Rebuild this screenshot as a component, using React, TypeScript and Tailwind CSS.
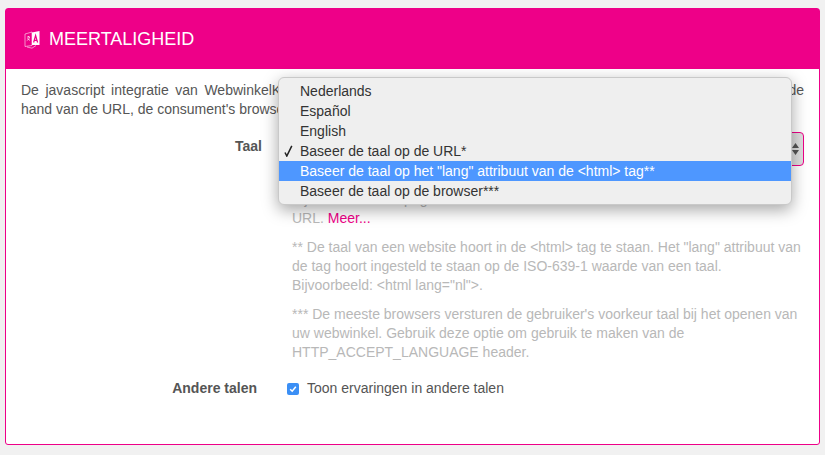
import type { ReactNode } from "react";

const options = [
  "Nederlands",
  "Español",
  "English",
  "Baseer de taal op de URL*",
  'Baseer de taal op het "lang" attribuut van de <html> tag**',
  "Baseer de taal op de browser***",
];

function TranslateIcon() {
  return (
    <svg width="17" height="19" viewBox="0 0 17 19" fill="none">
      <path d="M1 4 8 2V15.5L1 16.5Z" stroke="#fff" strokeWidth="0.7" opacity="0.8" />
      <path d="M8 2.5 15.5 1V15H8Z" fill="#fff" />
      <path d="M3 7H6M4.5 6V7M5.5 7C5 9 4 10 2.8 10.6M3.5 8.4C4 9.2 5 10 6 10.4" stroke="#fff" strokeWidth="0.7" />
      <path d="M9.6 12.5 11.6 5.5 13.6 12.5M10.4 10.4H12.8" stroke="#ee0088" strokeWidth="1.2" />
      <path d="M3 17 8 18.2 12 15.5" stroke="#fff" strokeWidth="0.7" opacity="0.8" />
    </svg>
  );
}

function Note({ children }: { children: ReactNode }) {
  return <p className="mb-[10px] whitespace-nowrap text-[14px] leading-[19px] text-[#b8b8b8]">{children}</p>;
}

export default function App() {
  return (
    <div className="h-[455px] w-[825px] overflow-hidden bg-[#f1f1f1] pl-[5px] pt-2 font-['Liberation_Sans',Arial,sans-serif]">
      <div className="h-[437px] w-[815px] rounded-[3px] border border-[#ee0088] bg-white">
        <div className="flex h-[60px] items-center gap-[8px] bg-[#ee0088] pl-[18px] text-white">
          <TranslateIcon />
          <span className="text-[18px]">MEERTALIGHEID</span>
        </div>

        <p className="mx-[15px] mt-[12px] text-[14px] leading-[19px] text-[#555]">
          <span className="block [text-align-last:justify]">
            De javascript integratie van WebwinkelKeur kan de taal van de sidebar correct en automatisch bepalen. Dit kan aan de
          </span>
          <span className="block whitespace-nowrap">hand van de URL, de consument's browser of de taal op de website.</span>
        </p>

        <div className="relative mt-[13px] flex">
          <div className="w-[256px] pt-[5px] text-right text-[14px] font-bold leading-[19px] text-[#555]">Taal</div>
          <div className="ml-[16px] w-[526px]">
            <div className="flex h-[34px] items-center justify-end rounded-[4px] border border-[#ee0088] bg-gradient-to-r from-[#f4f4f4] to-[#dedede] pr-[3px]">
              <svg width="9" height="14" viewBox="0 0 9 14">
                <path d="M4.5 1 8 6H1ZM4.5 13 1 8H8Z" fill="#555" />
              </svg>
            </div>
            <div className="mt-[5px] pl-[14px]">
              <Note>
                * De taal wordt bepaald op basis van de URL van de pagina.
                <br />
                Bijvoorbeeld: een pagina met /nl/ of /en/ in de
                <br />
                URL. <a className="text-[#ee0088]">Meer...</a>
              </Note>
              <Note>
                ** De taal van een website hoort in de &lt;html&gt; tag te staan. Het "lang" attribuut van
                <br />
                de tag hoort ingesteld te staan op de ISO-639-1 waarde van een taal.
                <br />
                Bijvoorbeeld: &lt;html lang="nl"&gt;.
              </Note>
              <Note>
                *** De meeste browsers versturen de gebruiker's voorkeur taal bij het openen van
                <br />
                uw webwinkel. Gebruik deze optie om gebruik te maken van de
                <br />
                HTTP_ACCEPT_LANGUAGE header.
              </Note>
            </div>
          </div>

          {/* open native select menu */}
          <ul className="absolute left-[272px] top-[-55px] w-[514px] rounded-[6px] border border-[#c9c9c9] bg-[#efefef] py-[3px] text-[14px] leading-[20px] text-[#333] shadow-[0_5px_16px_rgba(0,0,0,0.35)]">
            {options.map((o, i) => (
              <li key={o} className={`relative pl-[21px] ${i === 4 ? "bg-[#4e97ff] text-white" : ""}`}>
                {i === 3 && (
                  <svg className="absolute left-[5px] top-[4px]" width="9" height="12" viewBox="0 0 9 12" fill="none">
                    <path d="M1 7.5 2.8 11 7.8 0.8" stroke="#222" strokeWidth="1.5" />
                  </svg>
                )}
                {o}
              </li>
            ))}
          </ul>
        </div>

        <div className="mt-[6px] flex items-center">
          <div className="w-[251px] text-right text-[14px] font-bold text-[#555]">Andere talen</div>
          <span className="ml-[30px] flex h-[12px] w-[12px] items-center justify-center rounded-[2px] bg-[#3b8ff5]">
            <svg width="8" height="8" viewBox="0 0 8 8" fill="none">
              <path d="M1.2 4.2 3.2 6.2 6.8 1.8" stroke="#fff" strokeWidth="1.5" />
            </svg>
          </span>
          <span className="ml-[8px] text-[14px] text-[#555]">Toon ervaringen in andere talen</span>
        </div>
      </div>
    </div>
  );
}
